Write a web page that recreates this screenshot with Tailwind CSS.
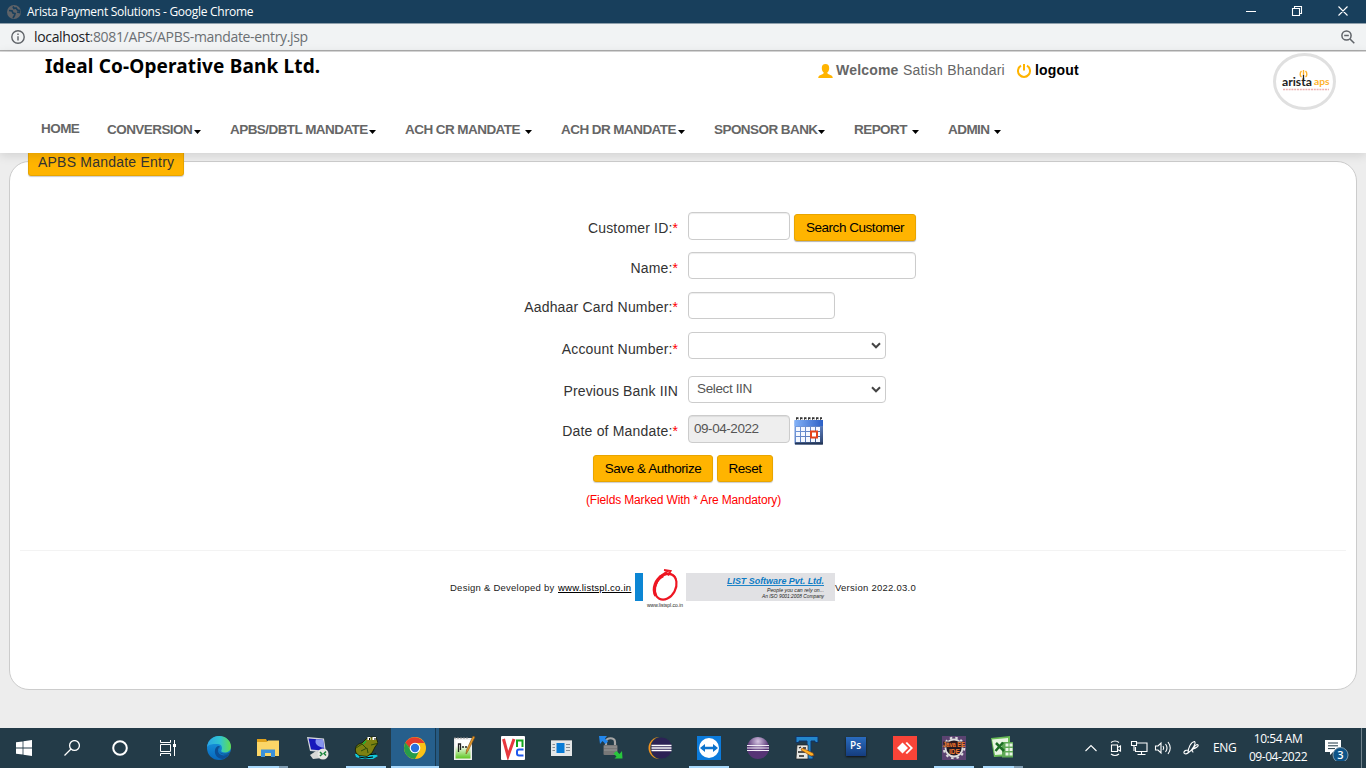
<!DOCTYPE html>
<html lang="en">
<head>
<meta charset="utf-8">
<title>Arista Payment Solutions</title>
<script src="https://cdn.jsdelivr.net/npm/@tailwindcss/browser@4"></script>
</head>
<body class="w-[1366px] h-[768px] overflow-hidden flex flex-col bg-[#ededed] font-['Liberation_Sans',Arial,sans-serif] whitespace-nowrap">

<!-- Window title bar -->
<div class="h-[23px] shrink-0 bg-[#183f5c] flex items-center pl-[7px] text-white">
  <svg class="size-[14px] shrink-0" viewBox="0 0 14 14"><circle cx="7" cy="7" r="7" fill="#5f6368"/><path d="M2 5.500l3 .3 1 2.200 2 .5-.5 2-1.500 2.500M6 1.500l1 2 2-.5 1.500 2 2 .5v2l-2.500-.5" fill="none" stroke="#183f5c" stroke-width="1.700"/></svg>
  <span class="ml-[6px] w-[300px] text-[12px] tracking-[-0.27px] font-['Open_Sans','Noto_Sans',sans-serif]">Arista Payment Solutions - Google Chrome</span>
  <svg class="ml-auto w-[110px] h-[20px] mr-[14px] shrink-0" viewBox="0 0 110 20" fill="none" stroke="#fff"><path d="M4 9.500h10M50.500 6.500h7v7h-7zM52.500 6.500v-2h7v7h-2M96.500 4.500l9 9M105.500 4.500l-9 9" stroke-width="1.100"/></svg>
</div>
<!-- Address bar -->
<div class="h-[29px] shrink-0 bg-[#f1f3f4] border-t border-t-[#8fa0ac] flex flex-col">
  <div class="flex-1 flex items-center px-[11px]">
    <svg class="size-[14px]" viewBox="0 0 14 14" fill="none" stroke="#5f6368" stroke-width="1.400"><circle cx="7" cy="7" r="6.200"/><path d="M7 6.200v4.300M7 3.400v1.500"/></svg>
    <span class="ml-[9px] text-[14px] leading-[20px] tracking-[-0.34px] text-[#6b6f73] font-['Open_Sans','Noto_Sans',sans-serif]"><span class="text-[#202124]">localhost</span>:8081/APS/APBS-mandate-entry.jsp</span>
    <svg class="ml-auto size-[14px]" viewBox="0 0 14 14" fill="none" stroke="#5f6368" stroke-width="1.500"><circle cx="5.500" cy="5.500" r="4.600"/><path d="M9 9l4.300 4.300M3.200 5.500h4.600"/></svg>
  </div>
  <div class="h-[2px] border-t border-t-[#acacac] bg-[#dcdcdc]"></div>
</div>

<!-- Site header -->
<header class="relative z-10 h-[101px] shrink-0 bg-white shadow-[0_2px_10px_rgba(0,0,0,0.13)] flex flex-col">
  <div class="flex h-[60px] items-start">
    <div class="ml-[45px] mt-[1px] w-[773px] text-[19px] leading-[26px] tracking-[0.15px] font-bold text-black font-['Noto_Sans',sans-serif]">Ideal Co-Operative Bank Ltd.</div>
    <div class="flex items-center mt-[8px] h-[20px] w-[455px] text-[14px] text-[#666]">
      <svg class="w-[15px] h-[14px] mt-[2px]" viewBox="0 0 15 14" fill="#ffb400"><path d="M7.500 0C5 0 3.800 1.600 3.800 4c0 2 .7 3.600 1.900 4.400 0 1-.4 1.400-1.400 1.800C2 11.100.4 11.700.2 14h14.600c-.2-2.300-1.800-2.900-4.100-3.800-1-.4-1.400-.8-1.400-1.800C10.500 7.600 11.200 6 11.200 4c0-2.400-1.200-4-3.700-4z"/></svg>
      <span class="ml-[3px] w-[67px] font-bold tracking-[0.2px]">Welcome</span>
      <span class="w-[114px] tracking-[0.2px]">Satish Bhandari</span>
      <svg class="size-[14px] mt-[2px]" viewBox="0 0 14 14" fill="none" stroke="#ffb400" stroke-width="2"><path d="M4 1.700a6 6 0 1 0 6 0M7 0v6.500"/></svg>
      <span class="ml-[4px] font-bold text-black tracking-[0.2px]">logout</span>
    </div>
    <svg class="w-[63px] h-[58px] mt-[1px]" viewBox="0 0 63 58"><ellipse cx="31.500" cy="28.500" rx="30" ry="27" fill="#fff" stroke="#e0e0e0" stroke-width="3"/>
      <text x="9" y="32.500" font-family="Lato" font-weight="700" font-size="12" fill="#222" textLength="30" lengthAdjust="spacingAndGlyphs">arista</text>
      <text x="41" y="31.500" font-family="Lato" font-weight="700" font-size="9" fill="#fdb22b" textLength="15.500" lengthAdjust="spacingAndGlyphs">aps</text>
      <path d="M28.500 18c-2 2-1.500 5 0 6M32.500 18c2 2 1.500 5 0 6M30.500 17v5" fill="none" stroke="#fdb22b" stroke-width="1.400"/><path d="M30.500 22v5" stroke="#222" stroke-width="1.300"/>
      <path d="M10 36.500h46" stroke="#d66" stroke-width="1.400" stroke-dasharray="2 .8" opacity=".5"/></svg>
  </div>
  <nav class="flex items-center h-[36px] pl-[41px] text-[13.5px] font-bold text-[#666] tracking-[-0.56px]">
    <span class="w-[66px] pb-[2px]">HOME</span>
    <span class="w-[94px] mr-[29px] flex items-center justify-between">CONVERSION<svg class="w-[7px] h-[4px] mt-[4px]" viewBox="0 0 7 4"><path d="M0 0h7L3.500 4z"/></svg></span>
    <span class="w-[146px] mr-[29px] flex items-center justify-between">APBS/DBTL MANDATE<svg class="w-[7px] h-[4px] mt-[4px]" viewBox="0 0 7 4"><path d="M0 0h7L3.500 4z"/></svg></span>
    <span class="w-[127px] mr-[29px] flex items-center justify-between">ACH CR MANDATE<svg class="w-[7px] h-[4px] mt-[4px]" viewBox="0 0 7 4"><path d="M0 0h7L3.500 4z"/></svg></span>
    <span class="w-[124px] mr-[29px] flex items-center justify-between">ACH DR MANDATE<svg class="w-[7px] h-[4px] mt-[4px]" viewBox="0 0 7 4"><path d="M0 0h7L3.500 4z"/></svg></span>
    <span class="w-[111px] mr-[29px] flex items-center justify-between">SPONSOR BANK<svg class="w-[7px] h-[4px] mt-[4px]" viewBox="0 0 7 4"><path d="M0 0h7L3.500 4z"/></svg></span>
    <span class="w-[65px] mr-[29px] flex items-center justify-between">REPORT<svg class="w-[7px] h-[4px] mt-[4px]" viewBox="0 0 7 4"><path d="M0 0h7L3.500 4z"/></svg></span>
    <span class="w-[53px] flex items-center justify-between">ADMIN<svg class="w-[7px] h-[4px] mt-[4px]" viewBox="0 0 7 4"><path d="M0 0h7L3.500 4z"/></svg></span>
  </nav>
</header>

<!-- Page body -->
<main class="h-[575px] shrink-0 px-[9px] pt-[8px]">
  <section class="h-[529px] rounded-[20px] border border-[#ccc] bg-white flex flex-col">
    <div class="-mt-[14px] ml-[18px] w-[156px] h-[28px] shrink-0 rounded-[3px] bg-[#ffb400] border border-[#e8a500] pl-[9px] text-[14px] leading-[26px] tracking-[0.22px] text-[#333] shadow-[0_1px_1px_rgba(0,0,0,0.2)]">APBS Mandate Entry</div>

    <form class="mt-[36px] flex flex-col text-[14px] leading-[16px] text-[#333]">
      <div class="flex h-[40px] items-start">
        <label class="w-[668px] mr-[10px] pt-[8px] text-right tracking-[0.18px]">Customer ID:<span class="text-[#f00] tracking-normal">*</span></label>
        <span class="w-[102px] h-[28px] rounded-[4px] border border-[#ccc] shadow-[inset_0_1px_1px_rgba(0,0,0,0.075)]"></span>
        <button type="button" class="ml-[4px] mt-[2px] w-[122px] h-[27px] rounded-[3px] bg-[#ffb400] border border-[#e8a500] text-[13.5px] text-black tracking-[-0.46px] shadow-[0_1px_1px_rgba(0,0,0,0.3)]">Search Customer</button>
      </div>
      <div class="flex h-[40px] items-start">
        <label class="w-[668px] mr-[10px] pt-[8px] text-right tracking-[0.18px]">Name:<span class="text-[#f00] tracking-normal">*</span></label>
        <span class="w-[228px] h-[27px] rounded-[4px] border border-[#ccc] shadow-[inset_0_1px_1px_rgba(0,0,0,0.075)]"></span>
      </div>
      <div class="flex h-[40px] items-start">
        <label class="w-[668px] mr-[10px] pt-[7px] text-right tracking-[0.18px]">Aadhaar Card Number:<span class="text-[#f00] tracking-normal">*</span></label>
        <span class="w-[147px] h-[27px] rounded-[4px] border border-[#ccc] shadow-[inset_0_1px_1px_rgba(0,0,0,0.075)]"></span>
      </div>
      <div class="flex h-[44px] items-start">
        <label class="w-[668px] mr-[10px] pt-[9px] text-right tracking-[0.18px]">Account Number:<span class="text-[#f00] tracking-normal">*</span></label>
        <span class="w-[198px] h-[27px] rounded-[4px] border border-[#ccc] flex items-center justify-end pr-[4px]"><svg class="w-[10px] h-[7px]" viewBox="0 0 10 7"><path d="M1 1.300l4 4 4-4" fill="none" stroke="#444" stroke-width="2"/></svg></span>
      </div>
      <div class="flex h-[39px] items-start">
        <label class="w-[668px] mr-[10px] pt-[7px] text-right tracking-[0.15px]">Previous Bank IIN</label>
        <span class="w-[198px] h-[27px] rounded-[4px] border border-[#ccc] flex items-center justify-between pl-[8px] pr-[4px] text-[13.5px] text-[#555] tracking-[-0.37px]"><span class="pb-px">Select IIN</span><svg class="w-[10px] h-[7px]" viewBox="0 0 10 7"><path d="M1 1.300l4 4 4-4" fill="none" stroke="#444" stroke-width="2"/></svg></span>
      </div>
      <div class="flex h-[40px] items-start">
        <label class="w-[668px] mr-[10px] pt-[8px] text-right tracking-[0.18px]">Date of Mandate:<span class="text-[#f00] tracking-normal">*</span></label>
        <span class="w-[102px] h-[28px] rounded-[4px] border border-[#ccc] bg-[#eee] pl-[5px] pt-[5px] text-[13.5px] text-[#555] tracking-[-0.45px] shadow-[inset_0_1px_1px_rgba(0,0,0,0.075)]">09-04-2022</span>
        <svg class="ml-[4px] mt-[2px] w-[30px] h-[28px]" viewBox="0 0 30 28">
          <defs><linearGradient id="cal" x1="0" y1="0" x2="1" y2="1"><stop offset="0" stop-color="#7da7ec"/><stop offset=".6" stop-color="#5a7cbd"/><stop offset="1" stop-color="#2b3f66"/></linearGradient><linearGradient id="cb" x1="0" x2="1"><stop offset="0" stop-color="#83b2f7"/><stop offset="1" stop-color="#2c60c6"/></linearGradient></defs>
          <rect x=".5" y="3" width="28.500" height="24.500" rx="1" fill="url(#cal)"/><rect x=".5" y="3" width="28.500" height="6" fill="url(#cb)"/><path d="M1 26.500h28" stroke="#243757" stroke-width="2"/>
          <g fill="#f4f8ff"><path d="M2 10h4v4H2zM7 10h4v4H7zM12 10h4v4h-4zM17 10h4v4h-4zM22 10h4v4h-4zM2 15h4v4H2zM7 15h4v4H7zM12 15h4v4h-4zM17 15h4v4h-4zM22 15h4v4h-4zM2 20h4v5H2zM7 20h4v5H7zM12 20h4v5h-4zM17 20h4v5h-4zM22 20h4v5h-4z"/></g>
          <rect x="17" y="14.500" width="6" height="6" fill="#fff" stroke="#e4431b" stroke-width="2"/>
          <path d="M2 1.500h26" stroke="#333" stroke-width="2.500" stroke-dasharray="2.500 1.500"/><path d="M3 2.500h26" stroke="#eee" stroke-width="1" stroke-dasharray="1.500 2.500"/>
        </svg>
      </div>
      <div class="flex gap-[4px] pl-[583px] text-[13.5px] text-black tracking-[-0.44px]">
        <button type="button" class="w-[120px] h-[27px] rounded-[3px] bg-[#ffb400] border border-[#e8a500] shadow-[0_1px_1px_rgba(0,0,0,0.2)]">Save &amp; Authorize</button>
        <button type="button" class="w-[56px] h-[27px] rounded-[3px] bg-[#ffb400] border border-[#e8a500] shadow-[0_1px_1px_rgba(0,0,0,0.2)]">Reset</button>
      </div>
      <p class="mt-[10px] pl-[576px] text-[12px] leading-[16px] text-[#f00] tracking-[-0.14px]">(Fields Marked With * Are Mandatory)</p>
    </form>

    <hr class="mt-[42px] mx-[10px] border-[#f3f3f3]">
    <footer class="mt-[18px] pl-[440px] flex items-start text-[9.5px] text-[#222]">
      <span class="w-[108px] pt-[11px] leading-[16px] tracking-[0.25px]">Design &amp; Developed by</span>
      <a class="w-[77px] pt-[11px] leading-[16px] text-black underline tracking-[0.25px]">www.listspl.co.in</a>
      <svg class="w-[200px] h-[40px]" viewBox="0 0 200 40"><rect x="0" y="4" width="8" height="28" fill="#0c86d4"/><rect x="51" y="4" width="149" height="28" fill="#e1e1e4"/>
        <g fill="none" stroke="#ee1622" transform="rotate(28 30 18)"><ellipse cx="30.500" cy="17.500" rx="10" ry="13.500" stroke-width="2.200"/><path d="M23 9c-5 6-3.500 17 3 21" stroke-width="3.200"/><path d="M24 7c3-4 9-5 12-1" stroke-width="1.500"/></g><path d="M29 1l6.500 1-2.500 4.500M24 8l9-6" fill="none" stroke="#ee1622" stroke-width="2"/>
        <text x="12" y="38" font-family="Liberation Sans" font-size="6" fill="#222" textLength="36" lengthAdjust="spacingAndGlyphs">www.listspl.co.in</text>
        <text x="92" y="15" font-family="Liberation Sans" font-size="9" font-weight="bold" font-style="italic" fill="#0c7bc4" text-decoration="underline" textLength="97" lengthAdjust="spacingAndGlyphs">LIST Software Pvt. Ltd.</text>
        <text x="132" y="23" font-family="Liberation Sans" font-size="5.500" font-style="italic" fill="#222" textLength="57" lengthAdjust="spacingAndGlyphs">People you can rely on...</text>
        <text x="127" y="29" font-family="Liberation Sans" font-size="5.500" font-style="italic" fill="#222" textLength="62" lengthAdjust="spacingAndGlyphs">An ISO 9001:2008 Company</text></svg>
      <span class="pt-[11px] leading-[16px] tracking-[0.26px]">Version 2022.03.0</span>
    </footer>
  </section>
</main>

<!-- Taskbar -->
<div class="h-[40px] shrink-0 bg-[#233b48] flex items-stretch text-white font-['Open_Sans','Noto_Sans',sans-serif]">
  <div class="w-[48px] flex items-center justify-center"><svg class="size-[16px]" viewBox="0 0 16 16" fill="#fff"><path d="M0 2.300l6.600-.9v6.200H0zM7.400 1.300L16 0v7.600H7.400zM0 8.400h6.600v6.200L0 13.700zM7.400 8.400H16V16l-8.600-1.300z"/></svg></div>
  <div class="w-[48px] flex items-center justify-center"><svg class="size-[16px]" viewBox="0 0 16 16" fill="none" stroke="#fff" stroke-width="1.300"><circle cx="10.500" cy="5.500" r="4.900"/><path d="M7 9l-6.500 6.500"/></svg></div>
  <div class="w-[48px] flex items-center justify-center"><svg class="size-[16px]" viewBox="0 0 16 16"><circle cx="8" cy="8" r="6.800" fill="none" stroke="#fff" stroke-width="2"/></svg></div>
  <div class="w-[50px] flex items-center pl-[16px]"><svg class="w-[17px] h-[16px]" viewBox="0 0 17 16" fill="none" stroke="#fff"><path d="M.5 0v2.500h10V0M.5 4.500h10v7H.5zM.5 16v-2.500h10V16M14.500 0v16"/><path d="M13 4h3v3h-3z" fill="#fff" stroke="none"/></svg></div>

  <!-- Edge -->
  <div class="w-[49px] flex items-center justify-center"><svg class="size-[24px]" viewBox="0 0 24 24"><defs><linearGradient id="e1" x1="0" x2="1"><stop offset="0" stop-color="#2aa5e6"/><stop offset=".55" stop-color="#31c5cf"/><stop offset="1" stop-color="#62dd4c"/></linearGradient><linearGradient id="e2" x1="0" x2="0" y1="0" y2="1"><stop offset="0" stop-color="#1b9de2"/><stop offset="1" stop-color="#0767bd"/></linearGradient></defs><circle cx="12" cy="12" r="12" fill="url(#e2)"/><path d="M0 11C1 4 6 0 12 0c7 0 12 5 12 10.500 0 4-3 6-6.500 6-2.500 0-4-1-3-2.500 1-2 .5-6-4-6C6 7.500 1 8.500 0 11z" fill="url(#e1)"/><path d="M8 14c-1 5 3 9 8 9 3-1 5-3 6-5-6 3-11 1-11-4 0-2 1-3 2-4-3-.5-4.500 1.500-5 4z" fill="#0c4f96"/><path d="M13 10.500c-2 2-2 4.500 1 6.500 3 1.500 7 1 9-1l1 .5-1.500 1.500c-5 1.500-10 0-11-4z" fill="#233b48" opacity=".6"/></svg></div>
  <!-- Explorer -->
  <div class="w-[49px] relative flex items-center justify-center"><svg class="w-[22px] h-[18px]" viewBox="0 0 22 18"><path d="M0 0h9l1 2h12v4H0z" fill="#e0a21c"/><path d="M0 3h10l1-1.500h11V17H0z" fill="#fcd667"/><path d="M4 17v-6.500h14V18h-4v-4H8v4H4z" fill="#3d91da"/></svg><i class="absolute bottom-0 left-[5px] w-[31px] h-[2px] bg-[#a8d8fb]"></i><i class="absolute bottom-0 left-[36px] w-[9px] h-[2px] bg-[#809db3]"></i></div>
  <!-- Remote desktop -->
  <div class="w-[49px] flex items-center justify-center"><svg class="size-[24px]" viewBox="0 0 24 24"><path d="M2 1l17 1.500 2 14L5 15z" fill="#d6d8dd"/><path d="M3.500 2.500L18 3.800l1.500 11L6 13.500z" fill="#1719bc"/><path d="M11 3.200l7 .6 1 8C13 11 9 8 11 3.200z" fill="#8795f0"/><path d="M5 19l6-4 7 1-1 6-9 1z" fill="#d7d8d5"/><circle cx="18" cy="18" r="5.500" fill="#e7e7e3"/><path d="M15 16l2 2-2 2M21 15.500l-2 2 2 2" fill="none" stroke="#168339" stroke-width="1.500"/></svg></div>
  <!-- Toad -->
  <div class="w-[49px] relative flex items-center justify-center"><svg class="size-[24px]" viewBox="0 0 24 24"><path d="M1 18l5-1 15 1 3 2-5 3H8l-6-2z" fill="#12c9dd"/><path d="M3 17l9 2 10-1M5 21l6 1 8-1" stroke="#000" stroke-width="1.200" fill="none"/><path d="M2 17C0 11 3 8 8 7l4-4 3-2 7 0 2 6-3 4-3 6-5 3.500-8-1z" fill="#7d8111" stroke="#101800" stroke-width=".8"/><path d="M2 12l6-4 4 4M7 15l6-3 1 5M17 9l6-1.500" stroke="#2c4d0a" stroke-width="1" fill="none"/><path d="M13.500 1h3v3h-3zM18.500 1H22v3h-3.500z" fill="#fff"/><path d="M15 2h1v2h-1zM20.500 2h1v2h-1z" fill="#000"/><path d="M9 8l3-3" stroke="#16b838" stroke-width="1.500"/></svg><i class="absolute bottom-0 left-[5px] w-[40px] h-[2px] bg-[#a8d8fb]"></i></div>
  <!-- Chrome -->
  <div class="w-[49px] relative flex items-center justify-center"><span class="absolute inset-y-0 left-px w-[44px] bg-[#265f8c]"></span><span class="absolute inset-y-0 left-[45px] w-[4px] bg-[#265a82] border-l border-l-[#183a52]"></span><svg class="relative size-[22px]" viewBox="0 0 22 22"><circle cx="11" cy="11" r="11" fill="#fbc116"/><path d="M1.500 5.500A11 11 0 0 0 11 22l4.500-8.500L11 11 6.500 13.500z" fill="#269c4a"/><path d="M1.500 5.500l5.200 8.200L11 11z" fill="#269c4a"/><path d="M11 6h9.500a11 11 0 0 0-19 -.5l5 6z" fill="#e33b2e"/><circle cx="11" cy="11" r="5.300" fill="#fff"/><circle cx="11" cy="11" r="4.200" fill="#2a70dd"/></svg><i class="absolute bottom-0 left-px w-[48px] h-[2px] bg-[#a8d8fb]"></i></div>
  <!-- Notepad++ -->
  <div class="w-[49px] flex items-center justify-center"><svg class="size-[24px]" viewBox="0 0 24 24"><defs><linearGradient id="np" x1="0" x2="0" y1="0" y2="1"><stop offset=".3" stop-color="#fff"/><stop offset="1" stop-color="#5fc723"/></linearGradient></defs><path d="M2 2h18v22H2z" fill="#eee"/><path d="M3.500 4h15v18.500h-15z" fill="url(#np)"/><path d="M3 1v2M6 1v2M9 1v2M12 1v2M15 1v2" stroke="#888"/><path d="M6.500 16V8h2v6M10 11h2M13 11h2" stroke="#222" stroke-width="1.300" fill="none"/><path d="M23 1l-7 14-2 3 .5-4L21 0z" fill="#e59a2b" stroke="#7b4e17" stroke-width=".6"/></svg></div>
  <!-- VNC -->
  <div class="w-[49px] flex items-center justify-center"><svg class="size-[24px]" viewBox="0 0 24 24"><rect width="24" height="24" rx="1" fill="#fff"/><path d="M2.500 3L7 20 13 3" fill="none" stroke="#e8383e" stroke-width="3"/><path d="M16 11V4.500h5.500V11" fill="none" stroke="#12a51c" stroke-width="2"/><path d="M22.500 13.500H18q-2 0-2 2v2q0 2 2 2h4.500" fill="none" stroke="#1e58ee" stroke-width="2"/></svg></div>
  <!-- Newsreader -->
  <div class="w-[49px] flex items-center justify-center"><svg class="w-[21px] h-[16px]" viewBox="0 0 21 16"><rect width="21" height="16" fill="#e4e6e7"/><path d="M0 .5h21" stroke="#a5a8aa"/><rect x="5.500" y="3" width="8" height="10" fill="#087bd6"/><path d="M1.500 4.500h2.500M1.500 7.500h2.500M1.500 10.500h2.500M15 4.500h4M15 7.500h4M15 10.500h4" stroke="#858b90"/></svg></div>
  <!-- WinSCP -->
  <div class="w-[49px] flex items-center justify-center"><svg class="size-[24px]" viewBox="0 0 24 24"><path d="M7 10V6c0-5 9-5 9 0v4" fill="none" stroke="#a5a5a5" stroke-width="2.200"/><rect x="4.500" y="9" width="14" height="10" rx="1" fill="#777"/><path d="M5 11h13M5 14h13" stroke="#999"/><path d="M0 0h8L6 2.500l3 3L6.500 8l-3-3L1 8z" fill="#2287ed"/><path d="M23.500 22.500h-8l2-2-3-3 3-2.500 3 3 2.500-3z" fill="#28c63c"/></svg></div>
  <!-- Eclipse -->
  <div class="w-[49px] flex items-center justify-center"><svg class="size-[24px]" viewBox="0 0 24 24"><circle cx="11.500" cy="12" r="11" fill="#f3941e"/><circle cx="13.500" cy="12" r="11.200" fill="#233b48"/><circle cx="13.500" cy="12" r="10.500" fill="#2c2255"/><path d="M3.500 9.500h20M3.500 12h20M3.500 14.500h20" stroke="#fff" stroke-width="1.500"/></svg></div>
  <!-- TeamViewer -->
  <div class="w-[49px] relative flex items-center justify-center"><svg class="size-[24px]" viewBox="0 0 24 24"><rect width="24" height="24" fill="#0c7bdb"/><circle cx="12" cy="12" r="10" fill="#fff"/><path d="M3 12l5-4v2.800h8V8l5 4-5 4v-2.800H8V16z" fill="#0c72cc"/></svg><i class="absolute bottom-0 left-[5px] w-[40px] h-[2px] bg-[#a8d8fb]"></i></div>
  <!-- Eclipse classic -->
  <div class="w-[49px] flex items-center justify-center"><svg class="size-[24px]" viewBox="0 0 24 24"><defs><radialGradient id="ec" cy=".2"><stop offset="0" stop-color="#d6c5e3"/><stop offset="1" stop-color="#563475"/></radialGradient></defs><circle cx="12" cy="12" r="11" fill="url(#ec)"/><path d="M1 9.500h22M1 12h22M1 14.500h22" stroke="#f3eef7" stroke-width="1"/></svg></div>
  <!-- Text editor -->
  <div class="w-[49px] flex items-center justify-center"><svg class="size-[24px]" viewBox="0 0 24 24"><path d="M1 .5h22v6h-3V5h-4v15h2v3h-8v-3h2V5H4v1.500H1z" fill="#2387cd" stroke="#113466"/><path d="M2 9h11v14H1z" fill="#e7e7e2" stroke="#222" stroke-width=".7"/><path d="M4 12l2-1M8 12h3M3 16h7M4 20h5" stroke="#222" stroke-width="1.300"/><path d="M7 12l11 5 1 2.500-3 .5-10-6z" fill="#ffaf25" stroke="#823b07" stroke-width=".6"/></svg></div>
  <!-- Photoshop -->
  <div class="w-[49px] flex items-center justify-center"><div class="w-[20px] h-[19px] -mt-[3px] bg-linear-to-b from-[#2a6cc0] to-[#153d7e] text-[10px] leading-[17px] text-center font-semibold shadow-[0_1px_2px_#111]">Ps</div></div>
  <!-- AnyDesk -->
  <div class="w-[49px] flex items-center justify-center"><svg class="size-[24px]" viewBox="0 0 24 24"><rect width="24" height="24" fill="#f94438"/><path d="M4 12l5.500-5.500L15 12l-5.500 5.500z" fill="#fff"/><path d="M12.500 7l1.500-1 6 6-6 6-1.500-1 5-5z" fill="#fff"/></svg></div>
  <!-- Java EE IDE -->
  <div class="w-[49px] relative flex items-center justify-center"><svg class="size-[24px] overflow-visible" viewBox="0 0 24 24"><rect width="24" height="24" fill="#5b4371"/><circle cx="12" cy="12" r="8.500" fill="#1d1825" stroke="#ddd" stroke-width="1.800"/><circle cx="12" cy="12" r="10.300" fill="none" stroke="#ddd" stroke-width="2" stroke-dasharray="2.500 3"/><rect x="1" y="5.500" width="22" height="6" fill="#3a1a1a" opacity=".75"/><text x="1" y="11" font-family="Liberation Sans" font-size="7" font-weight="bold" fill="#f0792f" textLength="22" lengthAdjust="spacingAndGlyphs">Java EE</text><text x="7" y="17.500" font-family="Liberation Sans" font-size="7" font-weight="bold" fill="#f0792f" textLength="11" lengthAdjust="spacingAndGlyphs">IDE</text></svg><i class="absolute bottom-0 left-[5px] w-[40px] h-[2px] bg-[#a8d8fb]"></i></div>
  <!-- Excel -->
  <div class="w-[49px] relative flex items-center justify-center pr-[2px]"><svg class="size-[24px]" viewBox="0 0 24 24"><path d="M1 2l19-2v20L4 21z" fill="#68bb55"/><path d="M2 3.500L18 2v16L5 19z" fill="#e8f4e2"/><rect x="12" y="6" width="11" height="15.500" fill="#5fa956"/><path d="M15.500 7.500h3v3h-3zM19.500 7.500h3v3h-3zM15.500 12h3v3h-3zM19.500 12h3v3h-3zM15.500 16.500h3v3h-3zM19.500 16.500h3v3h-3z" fill="#e9f5e5"/><path d="M6 7l8 8M13 6.500L5.500 15" stroke="#1d6d25" stroke-width="2.500"/></svg><i class="absolute bottom-0 left-[5px] w-[31px] h-[2px] bg-[#a8d8fb]"></i><i class="absolute bottom-0 left-[36px] w-[9px] h-[2px] bg-[#809db3]"></i></div>

  <!-- System tray -->
  <div class="ml-[58px] flex items-center shrink-0 w-[281px]">
    <svg class="w-[116px] h-[20px] shrink-0" viewBox="0 0 116 20" fill="none" stroke="#fff" stroke-width="1.100">
      <path d="M0.500 13L6 7.500l5.500 5.500"/>
      <path d="M26.500 7h6v6.500h-6zM32.500 9.500l3-1.500v5l-3-1.500M26 4.500q4-3 8 0M26 16q4 3 8 0"/>
      <path d="M51 5h11v8.500H50.500V9M56.500 13.500v3M52.500 16.500h8M46.500 3.500h5v4h-5zM49 7.500V13"/>
      <path d="M70.500 8h2.500l3-3v10l-3-3h-2.500zM78 8q1.500 2 0 4M80.500 6q3 4 0 8M83 4q4.500 6 0 12"/>
      <path d="M103 15c0-5 3-11 6.500-11.500 2 1.500-2 8.500-6.500 11.500-2 1.500-4.500 1-4-1 .5-1.500 2-2 4-2M108 11c2-4 4-5 5-4s-2 3-5 4c-1 1-1.500 3 .5 3"/>
    </svg>
    <span class="ml-[12px] w-[35px] shrink-0 text-[12px] tracking-[-0.4px]">ENG</span>
    <span class="w-[60px] shrink-0 text-[12px] leading-[18px] text-center tracking-[-0.45px]">10:54 AM<br>09-04-2022</span>
    <svg class="ml-[17px] w-[26px] h-[26px] shrink-0" viewBox="0 0 26 26"><path d="M0 5h16v12H8l-3 3v-3H0z" fill="#fff"/><path d="M3 8h10M3 10.800h10M3 13.600h7" stroke="#233b48"/><circle cx="15.500" cy="20" r="7.500" fill="#0e5488" stroke="#809bad"/><text x="15.500" y="24" text-anchor="middle" font-family="Open Sans" font-size="11" font-weight="600" fill="#fff">3</text></svg>
    <i class="ml-[10px] w-px h-[40px] bg-[#71828c]"></i>
  </div>
</div>
</body>
</html>
